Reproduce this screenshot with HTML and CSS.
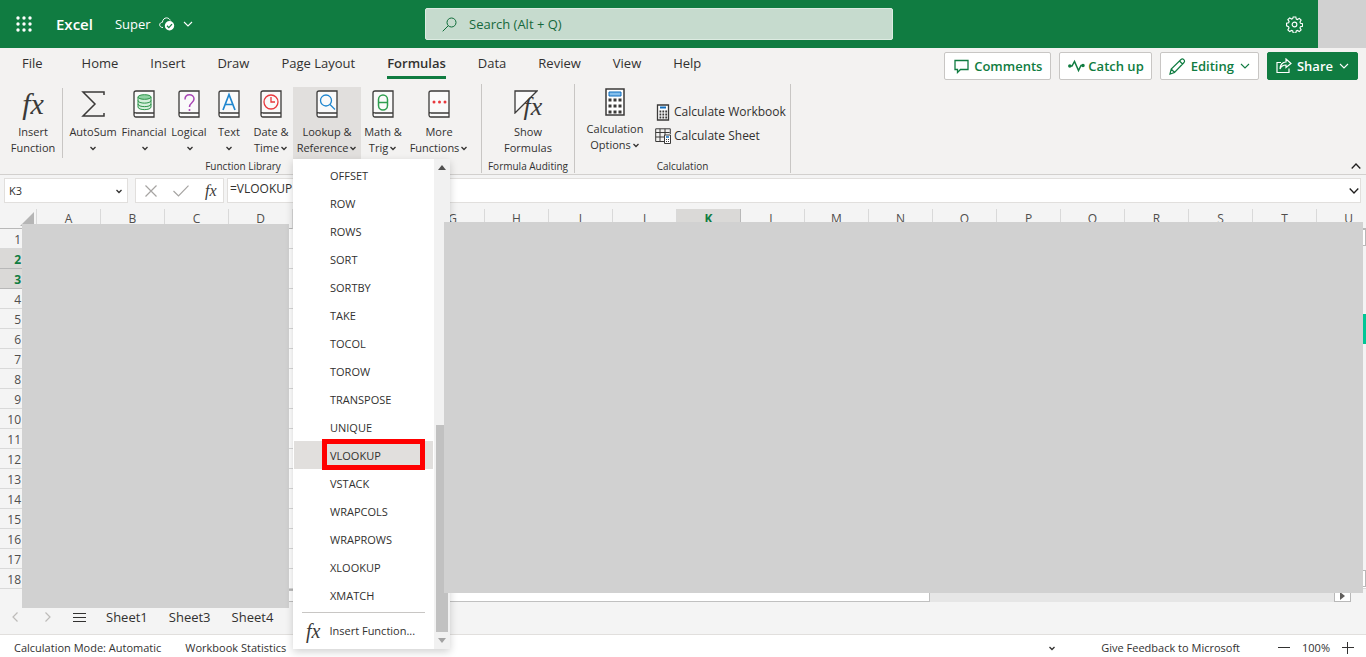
FILE: index.html
```html
<!DOCTYPE html>
<html lang="en">
<head>
<meta charset="utf-8">
<title>Super - Excel</title>
<link rel="stylesheet" href="styles.css">
</head>
<body>
<svg class="defs" aria-hidden="true">
  <symbol id="chev" viewBox="0 0 8 8"><path d="M1.500 3 4 5.500 6.500 3" fill="none" stroke="currentColor" stroke-width="1.300"/></symbol>
  <symbol id="chev-lg" viewBox="0 0 10 10"><path d="M1 3l4 4 4-4" fill="none" stroke="currentColor" stroke-width="1.100"/></symbol>
  <symbol id="book" viewBox="0 0 22 28"><path d="M1 25V3q0-2 2-2h18v26H3q-2 0-2-2.500T3 23h18" fill="#fafafa" stroke="#3b3a39" stroke-width="1.300"/></symbol>
</svg>

<header class="titlebar">
  <button class="launcher" aria-label="App launcher">
    <svg width="16" height="16" fill="#fff"><circle cx="2" cy="2" r="1.700"/><circle cx="8" cy="2" r="1.700"/><circle cx="14" cy="2" r="1.700"/><circle cx="2" cy="8" r="1.700"/><circle cx="8" cy="8" r="1.700"/><circle cx="14" cy="8" r="1.700"/><circle cx="2" cy="14" r="1.700"/><circle cx="8" cy="14" r="1.700"/><circle cx="14" cy="14" r="1.700"/></svg>
  </button>
  <span class="brand">Excel</span>
  <button class="docname">Super
    <svg width="16" height="14" viewBox="0 0 16 14"><path d="M4 10.500C1.500 10.500.7 9 .7 7.800.7 6.300 2 5.300 3.400 5.300 3.700 2.500 5.500.9 7.500.9c1.900 0 3.200 1.100 3.700 2.600" fill="none" stroke="#fff"/><circle cx="10.500" cy="8.700" r="4.700" fill="#fff"/><path d="M8 8.800l1.800 1.800 3.200-3.500" fill="none" stroke="#107c41" stroke-width="1.300"/></svg>
    <svg width="10" height="10"><use href="#chev-lg"/></svg>
  </button>
  <label class="search">
    <svg width="15" height="15" fill="none" stroke="#0e6b38"><circle cx="9.500" cy="5.500" r="4.500"/><path d="M6.300 8.700.7 14.300"/></svg>
    <input type="text" aria-label="Search" placeholder="Search (Alt + Q)">
  </label>
  <button class="gear" aria-label="Settings">
    <svg width="17" height="17" viewBox="0 0 18 18" fill="none" stroke="#fff" stroke-width="1.200"><path d="M7.600 1h2.800l.5 2.200 1.200.5 2-1.200 1.900 1.900-1.200 2 .5 1.200 2.200.5v2.800l-2.200.5-.5 1.200 1.200 2-1.900 1.900-2-1.200-1.200.5-.5 2.200H7.600l-.5-2.200-1.200-.5-2 1.200L2 14.600l1.200-2-.5-1.200L.6 10.400V7.600l2.200-.5.500-1.200-1.300-2L3.900 2l2 1.200 1.200-.5z"/><circle cx="9" cy="9" r="2.500"/></svg>
  </button>
  <div class="avatar"></div>
</header>

<section class="ribbon">
  <div class="tabrow">
    <nav class="tabs">
      <button class="tab tab-file">File</button><button class="tab">Home</button><button class="tab">Insert</button><button class="tab">Draw</button><button class="tab">Page Layout</button><button class="tab active">Formulas</button><button class="tab">Data</button><button class="tab">Review</button><button class="tab">View</button><button class="tab">Help</button>
    </nav>
    <div class="actions">
      <button class="act"><svg width="15" height="15" fill="none" stroke="#107c41" stroke-width="1.300"><path d="M1 1.500h13v9H6.500L3.500 13.500v-3H1z"/></svg>Comments</button>
      <button class="act catch"><svg width="17" height="14" fill="none" stroke="#107c41" stroke-width="1.500"><path d="M1 7h3l2.500-4.500 4 9L13 6.500h2"/><circle cx="1.800" cy="7" r="1" fill="#107c41"/><circle cx="15" cy="6.500" r="1" fill="#107c41"/></svg>Catch up</button>
      <button class="act"><svg width="17" height="17" fill="none" stroke="#107c41" stroke-width="1.200"><path d="M1 16l1.200-5L12 1.500c2-1.500 4.500 1 3 3L5.500 14.500zM10.500 3l3 3M2.200 11l3.300 3.500"/></svg>Editing<svg width="10" height="10"><use href="#chev-lg"/></svg></button>
      <button class="act share"><svg width="16" height="16" fill="none" stroke="#fff" stroke-width="1.200"><path d="M5 4.500H1v10h12v-4M10 1l5 4.500-5 4V7C7 7 5 8.500 4 11c0-4 2.500-7 6-7z"/></svg>Share<svg width="10" height="10"><use href="#chev-lg"/></svg></button>
    </div>
  </div>

  <div class="groups">
    <div class="group g-lib">
      <div class="gbody">
        <button class="rb w56"><span class="fx">fx</span><span>Insert<br>Function</span></button>
        <i class="sep"></i>
        <button class="rb w52"><svg width="24" height="28" fill="none" stroke="#3b3a39" stroke-width="1.500"><path d="M23 5V2H2l12 12L2 26h21v-3"/></svg><span>AutoSum<br><svg class="c"><use href="#chev"/></svg></span></button>
        <button class="rb w50"><svg width="22" height="28"><use href="#book"/><g fill="#d5efdb" stroke="#2b9348"><path d="M5 7v10c0 3.500 13 3.500 13 0V7"/><path fill="none" d="M5 10.500c0 3.500 13 3.500 13 0M5 14c0 3.500 13 3.500 13 0"/><ellipse cx="11.500" cy="7" rx="6.500" ry="2.300" fill="#8fd3a3"/></g></svg><span>Financial<br><svg class="c"><use href="#chev"/></svg></span></button>
        <button class="rb w40"><svg width="22" height="28"><use href="#book"/><path d="M7 9.500C7 3 16 3.500 16 9c0 4-4.500 3.500-4.500 8" fill="none" stroke="#a845b5" stroke-width="1.500"/><circle cx="11.500" cy="20" r="1" fill="#a845b5"/></svg><span>Logical<br><svg class="c"><use href="#chev"/></svg></span></button>
        <button class="rb w40"><svg width="22" height="28"><use href="#book"/><path d="M5 20l6-15.500L17 20M7 14.500h8" fill="none" stroke="#1f86cf" stroke-width="1.700"/></svg><span>Text<br><svg class="c"><use href="#chev"/></svg></span></button>
        <button class="rb w44"><svg width="22" height="28"><use href="#book"/><g fill="none" stroke="#e8383d" stroke-width="1.300"><circle cx="11" cy="12" r="7"/><path d="M11 7v5h4"/></g></svg><span>Date &amp;<br>Time<svg class="c"><use href="#chev"/></svg></span></button>
        <div class="dropdown">
          <button class="rb open"><svg width="22" height="28"><use href="#book"/><g fill="none" stroke="#1f86cf" stroke-width="1.300"><circle cx="10" cy="10.500" r="5.500"/><path d="M14 14.500l5 5"/></g></svg><span>Lookup &amp;<br>Reference<svg class="c"><use href="#chev"/></svg></span></button>
          <div class="menu">
            <div class="items">
              <button>OFFSET</button><button>ROW</button><button>ROWS</button><button>SORT</button><button>SORTBY</button><button>TAKE</button><button>TOCOL</button><button>TOROW</button><button>TRANSPOSE</button><button>UNIQUE</button>
              <button class="hot">VLOOKUP<i class="marker"></i></button>
              <button>VSTACK</button><button>WRAPCOLS</button><button>WRAPROWS</button><button>XLOOKUP</button><button>XMATCH</button>
              <hr>
              <button class="insertfn"><span class="fx small">fx</span>Insert Function...</button>
            </div>
            <div class="mscroll">
              <svg width="8" height="5"><path d="M0 5l4-5 4 5z" fill="#505050"/></svg>
              <i class="mthumb"></i>
              <svg width="8" height="5"><path d="M0 0l4 5 4-5z" fill="#a3a3a3"/></svg>
            </div>
          </div>
        </div>
        <button class="rb w44"><svg width="22" height="28"><use href="#book"/><g fill="none" stroke="#2f9e4f" stroke-width="1.500"><rect x="6.500" y="5" width="9" height="15" rx="4.500"/><path d="M6.500 12.500h9"/></g></svg><span>Math &amp;<br>Trig<svg class="c"><use href="#chev"/></svg></span></button>
        <button class="rb w68"><svg width="22" height="28"><use href="#book"/><g fill="#e8383d"><circle cx="6" cy="12" r="1.500"/><circle cx="11.500" cy="12" r="1.500"/><circle cx="17" cy="12" r="1.500"/></g></svg><span>More<br>Functions<svg class="c"><use href="#chev"/></svg></span></button>
      </div>
      <div class="glabel">Function Library</div>
    </div>
    <div class="group g-audit">
      <div class="gbody center">
        <button class="rb"><span class="show"><svg width="24" height="24"><path d="M1 23V1h22z" fill="#fafafa" stroke="#3b3a39" stroke-width="1.300"/></svg><span class="fx">fx</span></span><span>Show<br>Formulas</span></button>
      </div>
      <div class="glabel">Formula Auditing</div>
    </div>
    <div class="group g-calc">
      <div class="gbody">
        <button class="rb tight"><svg width="20" height="28"><path d="M1 1h18v26H1z" fill="#fff" stroke="#3b3a39" stroke-width="1.500"/><path d="M4 4h12v4H4z" fill="#83beec" stroke="#0f6cbd"/><path d="M3.500 12h13M3.500 18h13M3.500 24h13" stroke="#3b3a39" stroke-width="3" stroke-dasharray="3 2"/></svg><span>Calculation<br>Options<svg class="c"><use href="#chev"/></svg></span></button>
        <div class="calc">
          <button><svg width="16" height="17"><path d="M2.500 1h11v15h-11z" fill="#fff" stroke="#3b3a39" stroke-width="1.300"/><path d="M5 3.500h6" stroke="#0f6cbd" stroke-width="2"/><path d="M4.500 7.500h8M4.500 10.500h8M4.500 13.500h8" stroke="#3b3a39" stroke-width="1.800" stroke-dasharray="1.800 1.100"/></svg>Calculate Workbook</button>
          <button><svg width="16" height="16" fill="none" stroke="#3b3a39"><path d="M9 13.500H.7V.8h14.600V6M.7 4.500h14M.7 9H9M5 .8v12.700M10 .8V7"/><path d="M9.500 7h6v8.500h-6z" fill="#fff"/><path d="M11 9h3" stroke="#0f6cbd" stroke-width="1.500"/><path d="M11 11.500h3M11 13.500h3" stroke-dasharray="1 1"/></svg>Calculate Sheet</button>
        </div>
      </div>
      <div class="glabel">Calculation</div>
    </div>
    <button class="collapse" aria-label="Collapse ribbon"><svg width="10" height="8" fill="none" stroke="#201f1e" stroke-width="1.300"><path d="M.7 6.500 5 2l4.300 4.500"/></svg></button>
  </div>
</section>

<div class="formulabar">
  <label class="namebox"><input type="text" aria-label="Name box" value="K3"><svg class="c"><use href="#chev"/></svg></label>
  <div class="fbtns">
    <button aria-label="Cancel"><svg width="12" height="12" stroke="#a6a4a2" stroke-width="1.200"><path d="M.5.5l11 11M11.500.5l-11 11"/></svg></button>
    <button aria-label="Enter"><svg width="16" height="12" fill="none" stroke="#a6a4a2" stroke-width="1.200"><path d="M.5 6l5 5L15.500.7"/></svg></button>
    <button class="fx tiny" aria-label="Insert function">fx</button>
  </div>
  <label class="formula"><input type="text" aria-label="Formula" value="=VLOOKUP"><svg width="10" height="8" fill="none" stroke="#201f1e" stroke-width="1.300"><path d="M.7 1.500 5 6l4.300-4.500"/></svg></label>
</div>

<main class="sheet">
  <div class="gridclip">
    <table>
      <colgroup><col class="rowhead"><col span="21"></colgroup>
      <thead><tr><th><svg width="14" height="14"><path d="M14 0v14H0z" fill="#b5b5b5"/></svg></th><th>A</th><th>B</th><th>C</th><th>D</th><th>E</th><th>F</th><th>G</th><th>H</th><th>I</th><th>J</th><th class="sel">K</th><th>L</th><th>M</th><th>N</th><th>O</th><th>P</th><th>Q</th><th>R</th><th>S</th><th>T</th><th>U</th></tr></thead>
      <tbody>
        <tr><th>1</th><td colspan="21"></td></tr><tr><th class="sel">2</th><td colspan="21"></td></tr><tr><th class="sel">3</th><td colspan="21"></td></tr><tr><th>4</th><td colspan="21"></td></tr><tr><th>5</th><td colspan="21"></td></tr><tr><th>6</th><td colspan="21"></td></tr><tr><th>7</th><td colspan="21"></td></tr><tr><th>8</th><td colspan="21"></td></tr><tr><th>9</th><td colspan="21"></td></tr><tr><th>10</th><td colspan="21"></td></tr><tr><th>11</th><td colspan="21"></td></tr><tr><th>12</th><td colspan="21"></td></tr><tr><th>13</th><td colspan="21"></td></tr><tr><th>14</th><td colspan="21"></td></tr><tr><th>15</th><td colspan="21"></td></tr><tr><th>16</th><td colspan="21"></td></tr><tr><th>17</th><td colspan="21"></td></tr><tr><th>18</th><td colspan="21"></td></tr>
      </tbody>
    </table>
  </div>
  <div class="hscroll"><i class="hthumb"></i><i class="htrack"></i><button aria-label="Scroll right"><svg width="5" height="8"><path d="M0 0l5 4-5 4z" fill="#605e5c"/></svg></button></div>
  <div class="vscroll"><i></i><b></b><i></i></div>
  <div class="cover cover-left"></div>
  <div class="cover cover-right"></div>
</main>

<nav class="sheetbar">
  <button class="arrow" aria-label="Previous sheet"><svg width="6" height="10" fill="none" stroke="#bdbbb9" stroke-width="1.200"><path d="M5.500.5 1 5l4.500 4.500"/></svg></button>
  <button class="arrow" aria-label="Next sheet"><svg width="6" height="10" fill="none" stroke="#bdbbb9" stroke-width="1.200"><path d="M.5.5 5 5 .5 9.500"/></svg></button>
  <button class="all" aria-label="All sheets"><svg width="13" height="9" stroke="#323130"><path d="M0 .5h13M0 4.500h13M0 8.500h13"/></svg></button>
  <button class="stab">Sheet1</button><button class="stab">Sheet3</button><button class="stab">Sheet4</button>
</nav>

<footer class="status">
  <span>Calculation Mode: Automatic</span>
  <span>Workbook Statistics</span>
  <button class="more" aria-label="Status options"><svg class="c"><use href="#chev"/></svg></button>
  <a href="#">Give Feedback to Microsoft</a>
  <div class="zoom">
    <button aria-label="Zoom out"><svg width="12" height="12" stroke="#323130"><path d="M0 5.500h12"/></svg></button>
    <span>100%</span>
    <button aria-label="Zoom in"><svg width="12" height="12" stroke="#323130"><path d="M0 5.500h12M5.500 0v12"/></svg></button>
  </div>
</footer>
</body>
</html>
```
FILE: styles.css
```css
* { box-sizing: border-box; }
body {
  margin: 0;
  min-height: 100vh;
  display: flex;
  flex-direction: column;
  overflow: hidden;
  font: 11px/16px "Open Sans", sans-serif;
  color: #323130;
  background: #f4f4f4;
}
button, input {
  font: inherit;
  color: inherit;
  background: none;
  border: 0;
  padding: 0;
  margin: 0;
  outline: 0;
}
svg { flex: none; }
.defs { position: absolute; width: 0; height: 0; }
.c { width: 8px; height: 8px; margin-left: 1px; color: #323130; }
.fx { font: italic 30px/28px "Liberation Serif", serif; color: #3b3a39; }
.fx.small { font-size: 20px; }
.fx.tiny { font-size: 16px; line-height: 20px; }

/* Title bar */
.titlebar {
  position: relative;
  display: flex;
  align-items: center;
  height: 48px;
  color: #fff;
  background: #107c41;
}
.launcher { display: flex; margin-left: 16px; }
.brand { margin-left: 24px; font-size: 15px; font-weight: 600; }
.docname { display: flex; align-items: center; gap: 8px; margin-left: 22px; font-size: 13px; }
.search {
  position: absolute;
  left: 50%;
  transform: translateX(-50%);
  margin-left: -24px;
  width: 468px;
  height: 32px;
  display: flex;
  align-items: center;
  gap: 12px;
  padding: 0 16px;
  border: 1px solid #dcebe1;
  border-radius: 2px;
  background: #c6dbce;
}
.search input { flex: 1; font-size: 13px; }
.search input::placeholder { color: #16693c; opacity: 1; }
.gear { display: flex; margin-left: auto; margin-right: 15px; }
.avatar { width: 48px; height: 48px; background: #d1d1d1; }

/* Ribbon */
.ribbon { background: #f3f2f1; border-bottom: 1px solid #d2d0ce; }
.tabrow { display: flex; justify-content: space-between; height: 36px; padding: 4px 8px 0 6px; }
.tabs { display: flex; }
.tab { height: 27px; margin: 0 16px; font-size: 13px; line-height: 23px; padding-bottom: 1px; border-bottom: 3px solid transparent; }
.tab-file { margin-right: 23px; }
.tab.active { font-weight: 600; border-bottom-color: #107c41; }
.actions { display: flex; gap: 8px; }
.act {
  display: flex;
  align-items: center;
  gap: 5px;
  height: 28px;
  padding: 0 8px;
  border: 1px solid #c8c6c4;
  border-radius: 2px;
  background: #fff;
  color: #107c41;
  font-size: 13px;
  font-weight: 600;
}
.catch { gap: 3px; padding: 0 7px; }
.act svg:last-child { margin-left: 1px; }
.share { background: #107c41; border-color: #107c41; color: #fff; }

.groups { display: flex; height: 90px; }
.group { display: flex; flex-direction: column; height: 89px; padding-top: 3px; border-right: 1px solid #c8c6c4; }
.g-lib { width: 482px; padding-left: 5px; }
.g-audit { width: 93px; }
.g-calc { width: 216px; }
.gbody { display: flex; flex: 1; }
.gbody.center { justify-content: center; }
.glabel { font-size: 10px; line-height: 13px; text-align: center; }
.rb { display: flex; flex-direction: column; align-items: center; gap: 6px; height: 72px; padding-top: 3px; white-space: nowrap; justify-content: flex-start; }
.rb > span { text-align: center; }
.tight { padding-top: 1px; gap: 5px; width: 80px; }
.sep { width: 1px; height: 70px; margin: 1px 4px 0 1px; background: #c8c6c4; }
.w40 { width: 40px; }
.w44 { width: 44px; }
.w50 { width: 50px; }
.w52 { width: 52px; }
.w56 { width: 56px; }
.w68 { width: 68px; }
.show { display: flex; height: 28px; }
.show .fx { margin-left: -14px; line-height: 34px; font-size: 26px; }
.calc { display: flex; flex-direction: column; gap: 8px; padding-top: 17px; }
.calc button { display: flex; align-items: center; gap: 3px; height: 16px; font-size: 12px; }
.collapse { margin-left: auto; margin-right: 5px; align-self: flex-end; height: 16px; }

/* Lookup & Reference menu */
.dropdown { position: relative; width: 68px; }
.open { width: 68px; background: #e1dfdd; }
.menu {
  position: absolute;
  z-index: 5;
  top: 72px;
  left: 0;
  width: 157px;
  display: flex;
  background: #fff;
  box-shadow: 0 3px 8px rgba(0, 0, 0, 0.18);
}
.items { flex: 1; padding: 2px 1px 5px; }
.items button { position: relative; display: block; width: 100%; height: 28px; padding-top: 1px; padding-left: 36px; text-align: left; white-space: nowrap; }
.items .hot { background: #e1dfdd; }
.items hr { margin: 3px 8px; border: 0; border-top: 1px solid #c8c6c4; }
.items .insertfn { display: flex; align-items: center; gap: 9px; padding-left: 12px; }
.marker { position: absolute; left: 28px; right: 8px; top: -2px; bottom: -1px; border: 5px solid #f00; }
.mscroll { display: flex; flex-direction: column; align-items: center; width: 16px; padding: 6px 0; background: #f1f1f1; }
.mthumb { width: 12px; height: 207px; margin-top: auto; margin-bottom: 6px; background: #c1c1c1; }

/* Formula bar */
.formulabar { display: flex; height: 34px; padding: 3px 5px 0 4px; }
.formulabar > * { height: 25px; border: 1px solid #e1dfdd; background: #fff; }
.namebox { display: flex; align-items: center; width: 124px; padding: 0 4px; }
.namebox input { flex: 1; min-width: 0; }
.fbtns { display: flex; align-items: center; gap: 16px; width: 89px; margin: 0 3px 0 7px; padding: 0 9px; }
.fbtns button { display: flex; }
.formula { display: flex; flex: 1; align-items: center; padding: 0 1px 0 2px; }
.formula input { flex: 1; font-size: 12px; line-height: 16px; padding-bottom: 3px; }

/* Grid */
.sheet { position: relative; flex: 1; }
.gridclip { overflow: hidden; }
table { width: 1381px; table-layout: fixed; border-collapse: separate; border-spacing: 0; font-size: 12px; }
col { width: 64px; }
.rowhead { width: 37px; }
th, td { height: 20px; padding: 0; border-right: 1px solid #d9d9d9; border-bottom: 1px solid #d9d9d9; line-height: 19px; }
th { font-weight: 400; color: #504e4c; background: #f4f4f4; }
thead th { border-bottom-color: #b8b8b8; }
thead th:first-child { text-align: right; padding-right: 2px; }
thead svg { display: block; margin-left: auto; }
tbody th { text-align: right; padding: 2px 15px 0 0; line-height: 17px; }
.sel { font-weight: 700; color: #107c41; background: #dad9d7; border-color: #b8b8b8; }
td { background: #fff; }
.hscroll { display: flex; height: 13px; margin-left: 37px; margin-right: 15px; border-top: 1px solid #b8b8b8; }
.hthumb { flex: 0 1 893px; border: 1px solid #c0c0c0; background: #fff; }
.htrack { flex: 1; background: #e6e6e6; }
.hscroll button { display: flex; align-items: center; justify-content: center; width: 17px; border: 1px solid #b8b8b8; background: #fff; }
.vscroll { position: absolute; top: 20px; right: 0; bottom: 16px; width: 16px; display: flex; flex-direction: column; background: #f4f4f4; }
.vscroll i { height: 17px; border: 1px solid #b8b8b8; background: #fff; }
.vscroll b { flex: 0 0 30px; margin: 68px 0 auto; background: #00c795; }
.cover { position: absolute; background: #d1d1d1; }
.cover-left { left: 22px; top: 15px; width: 267px; bottom: -5px; }
.cover-right { left: 444px; right: 3px; top: 13px; bottom: 10px; z-index: 6; }

/* Sheet tabs and status */
.sheetbar { display: flex; align-items: center; height: 32px; padding: 0 0 3px 12px; border-bottom: 1px solid #e1dfdd; }
.arrow { width: 6px; margin-right: 27px; }
.sheetbar button { display: flex; }
.all { margin: 0 20px 0 -5px; }
.stab { font-size: 13px; margin-right: 21px; }
.status { display: flex; align-items: center; height: 22px; padding: 3px 12px 0 14px; background: #fff; gap: 24px; }
.status a { color: inherit; text-decoration: none; }
.status button { display: flex; }
.more { margin-left: auto; margin-right: 21px; }
.zoom { display: flex; align-items: center; gap: 12px; margin-left: 14px; }
```
